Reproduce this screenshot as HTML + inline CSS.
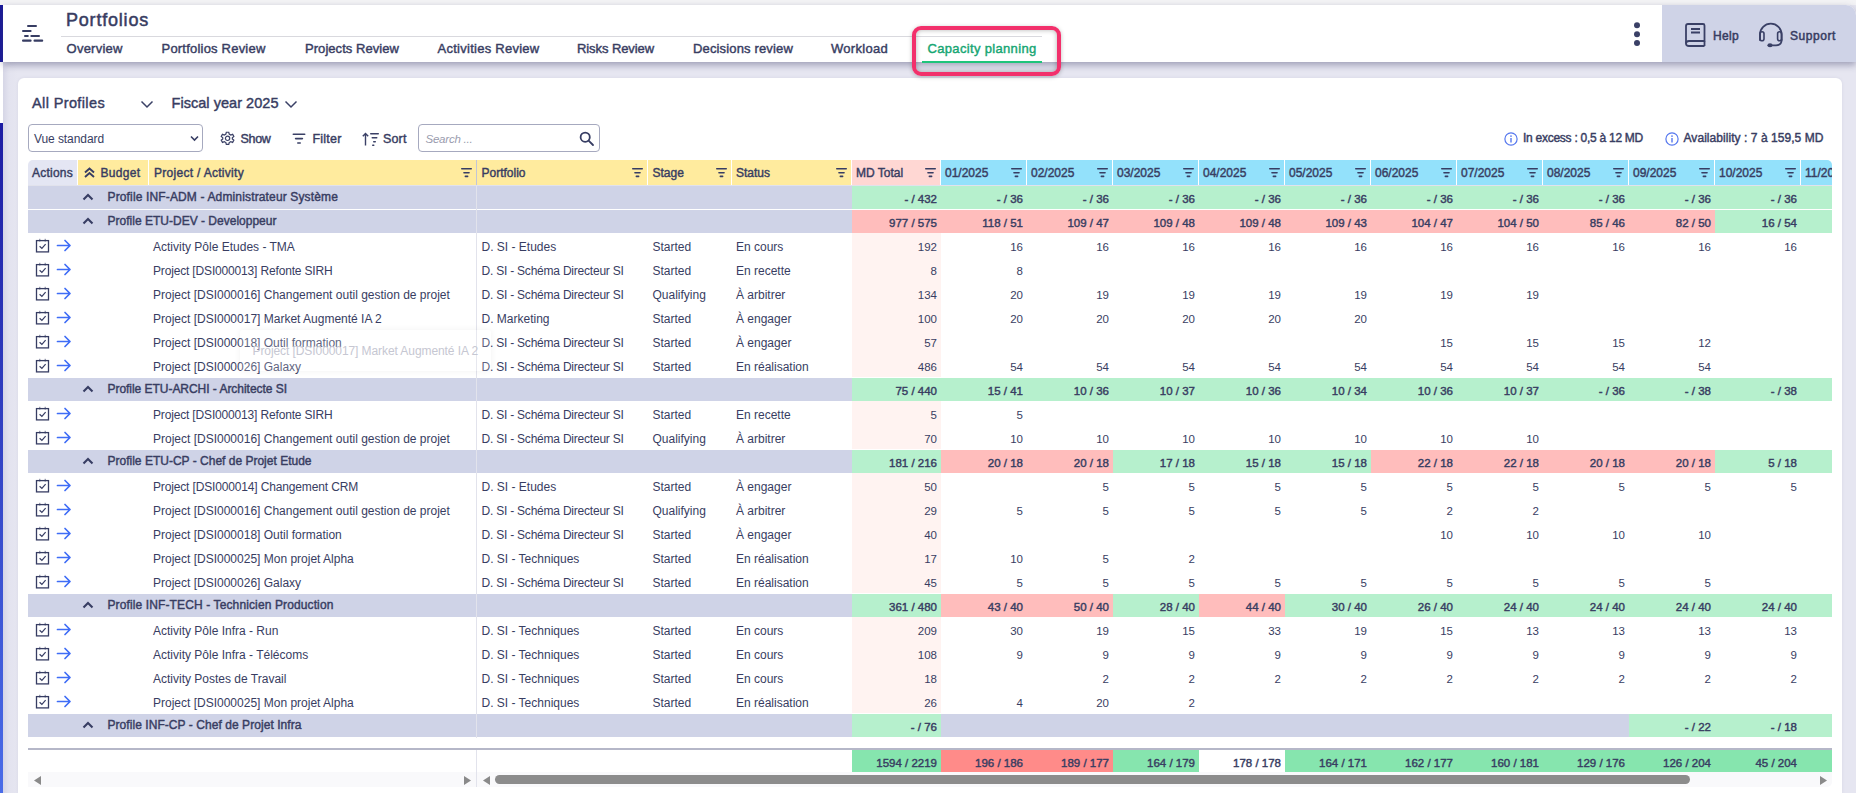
<!DOCTYPE html>
<html><head><meta charset="utf-8"><title>Capacity planning</title>
<style>
*{margin:0;padding:0;box-sizing:border-box}
html,body{width:1856px;height:793px;overflow:hidden}
body{position:relative;background:#e6e6f1;font-family:"Liberation Sans",sans-serif;color:#363b5e}
.a{position:absolute}
.t{position:absolute;white-space:nowrap;line-height:1}
</style></head><body>
<div class="a" style="left:0px;top:0px;width:1856px;height:5px;background:#f3f3f5;"></div>
<div class="a" style="left:3px;top:62px;width:1853px;height:731px;background:#e6e6f1;"></div>
<div class="a" style="left:3px;top:62px;width:15px;height:731px;background:linear-gradient(90deg,#d6d6e6,#e3e3ef 40%,#e6e6f1);"></div>
<div class="a" style="left:0px;top:5px;width:3px;height:57px;background:#17179a;"></div>
<div class="a" style="left:0px;top:62px;width:3px;height:61px;background:#ffffff;"></div>
<div class="a" style="left:0px;top:123px;width:3px;height:670px;background:linear-gradient(#1d1da3,#4a6ce8);"></div>
<div class="a" style="left:3px;top:5px;width:1853px;height:57px;background:#ffffff;border-top-right-radius:10px;box-shadow:0 3px 7px rgba(70,72,110,0.45);z-index:2"></div>
<div class="a" style="left:1662px;top:5px;width:194px;height:57px;background:#cfd3e7;border-top-right-radius:10px;z-index:2"></div>
<svg class="a" style="left:20px;top:22px;z-index:3" width="26" height="24" viewBox="0 0 26 24"><g fill="#373d63"><rect x="7" y="3" width="10" height="2" rx="1"/><rect x="2" y="8" width="9.6" height="2" rx="1"/><rect x="4" y="13" width="4.8" height="2" rx="1"/><rect x="10.3" y="13" width="9.7" height="2" rx="1"/><rect x="2" y="17.6" width="9.6" height="2.2" rx="1"/><rect x="13.5" y="17.6" width="9.7" height="2.2" rx="1"/></g></svg>
<div style="position:absolute;left:0;top:0;width:1856px;height:62px;z-index:3">
<div class="t" style="top:11px;font-size:18px;-webkit-text-stroke:0.42px currentColor;color:#383d62;letter-spacing:0.797px;left:66px;-webkit-text-stroke:0.5px currentColor">Portfolios</div>
<div class="a" style="left:61px;top:36px;width:981px;height:1px;background:#d9d9de;"></div>
<div class="t" style="top:42px;font-size:13px;-webkit-text-stroke:0.42px currentColor;color:#383d62;letter-spacing:0.228px;left:66.6px;">Overview</div>
<div class="t" style="top:42px;font-size:13px;-webkit-text-stroke:0.42px currentColor;color:#383d62;letter-spacing:0.210px;left:161.5px;">Portfolios Review</div>
<div class="t" style="top:42px;font-size:13px;-webkit-text-stroke:0.42px currentColor;color:#383d62;letter-spacing:0.054px;left:305px;">Projects Review</div>
<div class="t" style="top:42px;font-size:13px;-webkit-text-stroke:0.42px currentColor;color:#383d62;letter-spacing:0.263px;left:437.5px;">Activities Review</div>
<div class="t" style="top:42px;font-size:13px;-webkit-text-stroke:0.42px currentColor;color:#383d62;letter-spacing:-0.084px;left:577px;">Risks Review</div>
<div class="t" style="top:42px;font-size:13px;-webkit-text-stroke:0.42px currentColor;color:#383d62;letter-spacing:0.154px;left:693px;">Decisions review</div>
<div class="t" style="top:42px;font-size:13px;-webkit-text-stroke:0.42px currentColor;color:#383d62;letter-spacing:0.291px;left:831px;">Workload</div>
<div class="t" style="top:42px;font-size:13px;-webkit-text-stroke:0.42px currentColor;color:#17a673;letter-spacing:0.333px;left:927.5px;">Capacity planning</div>
<div class="a" style="left:922px;top:61px;width:120px;height:2px;background:#1fc47b;"></div>
<svg class="a" style="left:1632px;top:20px;" width="10" height="28" viewBox="0 0 10 28"><g fill="#3a4066"><circle cx="5" cy="5.2" r="3"/><circle cx="5" cy="14.2" r="3"/><circle cx="5" cy="23.1" r="3"/></g></svg>
<svg class="a" style="left:1683px;top:22px;" width="24" height="26" viewBox="0 0 24 26"><g fill="none" stroke="#3a4066" stroke-width="1.8" stroke-linejoin="round"><path d="M3 4 Q3 2 5 2 H20 Q21.5 2 21.5 3.5 V19 H6 Q3 19 3 21.5 Q3 24 6 24 H21.5"/><path d="M3 4 V21.5"/><path d="M21.5 19 V24"/><path d="M8 7 H17 M8 10.5 H17"/></g></svg>
<div class="t" style="top:30px;font-size:12px;-webkit-text-stroke:0.42px currentColor;color:#383d62;letter-spacing:0.330px;left:1713px;-webkit-text-stroke:0.5px currentColor">Help</div>
<svg class="a" style="left:1757px;top:22px;" width="28" height="27" viewBox="0 0 28 27"><g fill="none" stroke="#3a4066" stroke-width="1.8" stroke-linecap="round"><path d="M3 18 V12.5 A10.8 10.8 0 0 1 24.6 12.5 V18"/><rect x="3" y="9.8" width="4" height="9" rx="2" stroke-width="1.6"/><rect x="20.6" y="9.8" width="4" height="9" rx="2" stroke-width="1.6"/><path d="M24.6 18 Q24.6 23.3 19 23.3 H14.5"/></g><ellipse cx="13" cy="23.3" rx="2.6" ry="2" fill="#3a4066"/></svg>
<div class="t" style="top:30px;font-size:12px;-webkit-text-stroke:0.42px currentColor;color:#383d62;letter-spacing:0.567px;left:1790px;-webkit-text-stroke:0.5px currentColor">Support</div>
</div>
<div class="a" style="left:912px;top:26px;width:149px;height:50px;background:transparent;border:4px solid #f2306b;border-radius:9px;box-shadow:inset 0 0 5px rgba(0,0,0,0.3), 0 1px 4px rgba(0,0,0,0.25);z-index:5"></div>
<div class="a" style="left:18px;top:78px;width:1824px;height:720px;background:#ffffff;border-radius:6px;box-shadow:0 0 3px rgba(120,120,160,0.15)"></div>
<div class="t" style="top:96px;font-size:14.5px;-webkit-text-stroke:0.42px currentColor;color:#383d62;letter-spacing:0.376px;left:32px;">All Profiles</div>
<svg class="a" style="left:140px;top:100px;" width="14" height="9" viewBox="0 0 14 9"><path d="M1.5 1.5 L7 7 L12.5 1.5" fill="none" stroke="#3a4066" stroke-width="1.5"/></svg>
<div class="t" style="top:96px;font-size:14.5px;-webkit-text-stroke:0.42px currentColor;color:#383d62;letter-spacing:0.038px;left:171.5px;">Fiscal year 2025</div>
<svg class="a" style="left:284px;top:100px;" width="14" height="9" viewBox="0 0 14 9"><path d="M1.5 1.5 L7 7 L12.5 1.5" fill="none" stroke="#3a4066" stroke-width="1.5"/></svg>
<div class="a" style="left:28px;top:124px;width:175px;height:28px;background:#ffffff;border:1.3px solid #a6a9bf;border-radius:4px"></div>
<div class="t" style="top:133px;font-size:12px;color:#383d62;letter-spacing:-0.078px;left:34px;">Vue standard</div>
<svg class="a" style="left:190px;top:135px;" width="9" height="7" viewBox="0 0 9 7"><path d="M1 1.5 L4.5 5 L8 1.5" fill="none" stroke="#373d63" stroke-width="1.6"/></svg>
<svg class="a" style="left:219.5px;top:131px;" width="15" height="15" viewBox="0 0 15 15"><g fill="none" stroke="#3a4066" stroke-width="1.3" transform="translate(0.5 0.3) scale(0.94)"><path d="M6.2 1 H8.8 L9.3 3 L10.9 3.9 L12.9 3.2 L14.2 5.5 L12.6 6.9 V8.1 L14.2 9.5 L12.9 11.8 L10.9 11.1 L9.3 12 L8.8 14 H6.2 L5.7 12 L4.1 11.1 L2.1 11.8 L0.8 9.5 L2.4 8.1 V6.9 L0.8 5.5 L2.1 3.2 L4.1 3.9 L5.7 3 Z"/><circle cx="7.5" cy="7.5" r="2.3"/></g></svg>
<div class="t" style="top:133px;font-size:12.5px;-webkit-text-stroke:0.42px currentColor;color:#383d62;letter-spacing:-0.317px;left:240.5px;">Show</div>
<svg class="a" style="left:292px;top:133px;" width="14" height="12" viewBox="0 0 14 12"><g fill="#3a4066"><rect x="0.5" y="0.5" width="13" height="1.6" rx="0.8"/><rect x="2.8" y="4.8" width="8.4" height="1.6" rx="0.8"/><rect x="5" y="9.2" width="4" height="1.6" rx="0.8"/></g></svg>
<div class="t" style="top:133px;font-size:12.5px;-webkit-text-stroke:0.42px currentColor;color:#383d62;letter-spacing:0.204px;left:312.5px;">Filter</div>
<svg class="a" style="left:361.5px;top:132px;" width="18" height="14" viewBox="0 0 18 14"><g fill="none" stroke="#3a4066" stroke-width="1.4"><path d="M3.5 13.5 V1.5 M0.8 4.3 L3.5 1.5 L6.2 4.3"/></g><g fill="#3a4066"><rect x="8" y="1" width="9" height="1.5" rx="0.7"/><rect x="9.5" y="5" width="6" height="1.5" rx="0.7"/><rect x="11" y="9" width="3" height="1.5" rx="0.7"/><rect x="10" y="12.5" width="2.5" height="1.5" rx="0.7"/></g></svg>
<div class="t" style="top:133px;font-size:12.5px;-webkit-text-stroke:0.42px currentColor;color:#383d62;letter-spacing:0.144px;left:383px;">Sort</div>
<div class="a" style="left:418px;top:124px;width:182px;height:28px;background:#ffffff;border:1.3px solid #a6a9bf;border-radius:4px"></div>
<div class="t" style="top:134px;font-size:11.5px;font-style:italic;color:#9a9cae;letter-spacing:-0.222px;left:425.5px;">Search ...</div>
<svg class="a" style="left:579px;top:131px;" width="16" height="16" viewBox="0 0 16 16"><g fill="none" stroke="#373d63" stroke-width="1.8"><circle cx="6.2" cy="6.2" r="4.6"/><path d="M9.6 9.6 L14 14" stroke-linecap="round"/></g></svg>
<svg class="a" style="left:1503.5px;top:131.5px;" width="14" height="14" viewBox="0 0 14 14"><circle cx="7" cy="7" r="6.1" fill="none" stroke="#5577ee" stroke-width="1.2"/><rect x="6.3" y="6" width="1.4" height="4.5" fill="#5577ee"/><circle cx="7" cy="4.1" r="0.85" fill="#5577ee"/></svg>
<div class="t" style="top:132px;font-size:12px;-webkit-text-stroke:0.42px currentColor;color:#383d62;letter-spacing:-0.263px;left:1523px;">In excess : 0,5 à 12 MD</div>
<svg class="a" style="left:1664.5px;top:131.5px;" width="14" height="14" viewBox="0 0 14 14"><circle cx="7" cy="7" r="6.1" fill="none" stroke="#5577ee" stroke-width="1.2"/><rect x="6.3" y="6" width="1.4" height="4.5" fill="#5577ee"/><circle cx="7" cy="4.1" r="0.85" fill="#5577ee"/></svg>
<div class="t" style="top:132px;font-size:12px;-webkit-text-stroke:0.42px currentColor;color:#383d62;letter-spacing:0.055px;left:1683.5px;">Availability : 7 à 159,5 MD</div>
<div class="a" style="left:28px;top:160px;width:49px;height:25px;background:#e4e6f3;border-top-left-radius:5px"></div>
<div class="a" style="left:78px;top:160px;width:70px;height:25px;background:#ffeb9e;"></div>
<div class="a" style="left:149px;top:160px;width:327px;height:25px;background:#ffeb9e;"></div>
<div class="a" style="left:477px;top:160px;width:170px;height:25px;background:#ffeb9e;"></div>
<div class="a" style="left:648px;top:160px;width:83px;height:25px;background:#ffeb9e;"></div>
<div class="a" style="left:732px;top:160px;width:119px;height:25px;background:#ffeb9e;"></div>
<div class="a" style="left:852px;top:160px;width:88px;height:25px;background:#ffd7d3;"></div>
<div class="a" style="left:941px;top:160px;width:85px;height:25px;background:#93e1fb;"></div>
<div class="a" style="left:1027px;top:160px;width:85px;height:25px;background:#93e1fb;"></div>
<div class="a" style="left:1113px;top:160px;width:85px;height:25px;background:#93e1fb;"></div>
<div class="a" style="left:1199px;top:160px;width:85px;height:25px;background:#93e1fb;"></div>
<div class="a" style="left:1285px;top:160px;width:85px;height:25px;background:#93e1fb;"></div>
<div class="a" style="left:1371px;top:160px;width:85px;height:25px;background:#93e1fb;"></div>
<div class="a" style="left:1457px;top:160px;width:85px;height:25px;background:#93e1fb;"></div>
<div class="a" style="left:1543px;top:160px;width:85px;height:25px;background:#93e1fb;"></div>
<div class="a" style="left:1629px;top:160px;width:85px;height:25px;background:#93e1fb;"></div>
<div class="a" style="left:1715px;top:160px;width:85px;height:25px;background:#93e1fb;"></div>
<div class="a" style="left:1801px;top:160px;width:31px;height:25px;background:#93e1fb;border-top-right-radius:5px"></div>
<div class="t" style="top:167px;font-size:12px;-webkit-text-stroke:0.42px currentColor;color:#383d62;letter-spacing:0.235px;left:32px;">Actions</div>
<svg class="a" style="left:83px;top:167px;" width="13" height="11" viewBox="0 0 13 11"><g fill="none" stroke="#373d63" stroke-width="1.9"><path d="M2 5.5 L6.5 1.5 L11 5.5"/><path d="M2 10 L6.5 6 L11 10"/></g></svg>
<div class="t" style="top:167px;font-size:12px;-webkit-text-stroke:0.42px currentColor;color:#383d62;letter-spacing:0.328px;left:100.5px;">Budget</div>
<div class="t" style="top:167px;font-size:12px;-webkit-text-stroke:0.42px currentColor;color:#383d62;letter-spacing:0.295px;left:154px;">Project / Activity</div>
<div class="t" style="top:167px;font-size:12px;-webkit-text-stroke:0.42px currentColor;color:#383d62;left:481.5px;">Portfolio</div>
<div class="t" style="top:167px;font-size:12px;-webkit-text-stroke:0.42px currentColor;color:#383d62;left:652.5px;">Stage</div>
<div class="t" style="top:167px;font-size:12px;-webkit-text-stroke:0.42px currentColor;color:#383d62;left:736px;">Status</div>
<div class="t" style="top:167px;font-size:12px;-webkit-text-stroke:0.42px currentColor;color:#383d62;left:856px;">MD Total</div>
<div class="a" style="left:0;top:0;width:1832px;height:793px;overflow:hidden">
<div class="t" style="top:167px;font-size:12px;-webkit-text-stroke:0.42px currentColor;color:#383d62;left:945px;">01/2025</div>
<div class="t" style="top:167px;font-size:12px;-webkit-text-stroke:0.42px currentColor;color:#383d62;left:1031px;">02/2025</div>
<div class="t" style="top:167px;font-size:12px;-webkit-text-stroke:0.42px currentColor;color:#383d62;left:1117px;">03/2025</div>
<div class="t" style="top:167px;font-size:12px;-webkit-text-stroke:0.42px currentColor;color:#383d62;left:1203px;">04/2025</div>
<div class="t" style="top:167px;font-size:12px;-webkit-text-stroke:0.42px currentColor;color:#383d62;left:1289px;">05/2025</div>
<div class="t" style="top:167px;font-size:12px;-webkit-text-stroke:0.42px currentColor;color:#383d62;left:1375px;">06/2025</div>
<div class="t" style="top:167px;font-size:12px;-webkit-text-stroke:0.42px currentColor;color:#383d62;left:1461px;">07/2025</div>
<div class="t" style="top:167px;font-size:12px;-webkit-text-stroke:0.42px currentColor;color:#383d62;left:1547px;">08/2025</div>
<div class="t" style="top:167px;font-size:12px;-webkit-text-stroke:0.42px currentColor;color:#383d62;left:1633px;">09/2025</div>
<div class="t" style="top:167px;font-size:12px;-webkit-text-stroke:0.42px currentColor;color:#383d62;left:1719px;">10/2025</div>
<div class="t" style="top:167px;font-size:12px;-webkit-text-stroke:0.42px currentColor;color:#383d62;left:1805px;">11/2025</div>
</div>
<svg class="a" style="left:461px;top:167px;" width="11" height="11" viewBox="0 0 11 11"><g fill="#373d63"><rect x="0" y="1" width="11" height="1.5" rx="0.7"/><rect x="2.2" y="4.9" width="6.6" height="1.5" rx="0.7"/><rect x="3.6" y="8.6" width="3.8" height="1.6" rx="0.7"/></g></svg>
<svg class="a" style="left:632px;top:167px;" width="11" height="11" viewBox="0 0 11 11"><g fill="#373d63"><rect x="0" y="1" width="11" height="1.5" rx="0.7"/><rect x="2.2" y="4.9" width="6.6" height="1.5" rx="0.7"/><rect x="3.6" y="8.6" width="3.8" height="1.6" rx="0.7"/></g></svg>
<svg class="a" style="left:716px;top:167px;" width="11" height="11" viewBox="0 0 11 11"><g fill="#373d63"><rect x="0" y="1" width="11" height="1.5" rx="0.7"/><rect x="2.2" y="4.9" width="6.6" height="1.5" rx="0.7"/><rect x="3.6" y="8.6" width="3.8" height="1.6" rx="0.7"/></g></svg>
<svg class="a" style="left:836px;top:167px;" width="11" height="11" viewBox="0 0 11 11"><g fill="#373d63"><rect x="0" y="1" width="11" height="1.5" rx="0.7"/><rect x="2.2" y="4.9" width="6.6" height="1.5" rx="0.7"/><rect x="3.6" y="8.6" width="3.8" height="1.6" rx="0.7"/></g></svg>
<svg class="a" style="left:925px;top:167px;" width="11" height="11" viewBox="0 0 11 11"><g fill="#373d63"><rect x="0" y="1" width="11" height="1.5" rx="0.7"/><rect x="2.2" y="4.9" width="6.6" height="1.5" rx="0.7"/><rect x="3.6" y="8.6" width="3.8" height="1.6" rx="0.7"/></g></svg>
<svg class="a" style="left:1011px;top:167px;" width="11" height="11" viewBox="0 0 11 11"><g fill="#373d63"><rect x="0" y="1" width="11" height="1.5" rx="0.7"/><rect x="2.2" y="4.9" width="6.6" height="1.5" rx="0.7"/><rect x="3.6" y="8.6" width="3.8" height="1.6" rx="0.7"/></g></svg>
<svg class="a" style="left:1097px;top:167px;" width="11" height="11" viewBox="0 0 11 11"><g fill="#373d63"><rect x="0" y="1" width="11" height="1.5" rx="0.7"/><rect x="2.2" y="4.9" width="6.6" height="1.5" rx="0.7"/><rect x="3.6" y="8.6" width="3.8" height="1.6" rx="0.7"/></g></svg>
<svg class="a" style="left:1183px;top:167px;" width="11" height="11" viewBox="0 0 11 11"><g fill="#373d63"><rect x="0" y="1" width="11" height="1.5" rx="0.7"/><rect x="2.2" y="4.9" width="6.6" height="1.5" rx="0.7"/><rect x="3.6" y="8.6" width="3.8" height="1.6" rx="0.7"/></g></svg>
<svg class="a" style="left:1269px;top:167px;" width="11" height="11" viewBox="0 0 11 11"><g fill="#373d63"><rect x="0" y="1" width="11" height="1.5" rx="0.7"/><rect x="2.2" y="4.9" width="6.6" height="1.5" rx="0.7"/><rect x="3.6" y="8.6" width="3.8" height="1.6" rx="0.7"/></g></svg>
<svg class="a" style="left:1355px;top:167px;" width="11" height="11" viewBox="0 0 11 11"><g fill="#373d63"><rect x="0" y="1" width="11" height="1.5" rx="0.7"/><rect x="2.2" y="4.9" width="6.6" height="1.5" rx="0.7"/><rect x="3.6" y="8.6" width="3.8" height="1.6" rx="0.7"/></g></svg>
<svg class="a" style="left:1441px;top:167px;" width="11" height="11" viewBox="0 0 11 11"><g fill="#373d63"><rect x="0" y="1" width="11" height="1.5" rx="0.7"/><rect x="2.2" y="4.9" width="6.6" height="1.5" rx="0.7"/><rect x="3.6" y="8.6" width="3.8" height="1.6" rx="0.7"/></g></svg>
<svg class="a" style="left:1527px;top:167px;" width="11" height="11" viewBox="0 0 11 11"><g fill="#373d63"><rect x="0" y="1" width="11" height="1.5" rx="0.7"/><rect x="2.2" y="4.9" width="6.6" height="1.5" rx="0.7"/><rect x="3.6" y="8.6" width="3.8" height="1.6" rx="0.7"/></g></svg>
<svg class="a" style="left:1613px;top:167px;" width="11" height="11" viewBox="0 0 11 11"><g fill="#373d63"><rect x="0" y="1" width="11" height="1.5" rx="0.7"/><rect x="2.2" y="4.9" width="6.6" height="1.5" rx="0.7"/><rect x="3.6" y="8.6" width="3.8" height="1.6" rx="0.7"/></g></svg>
<svg class="a" style="left:1699px;top:167px;" width="11" height="11" viewBox="0 0 11 11"><g fill="#373d63"><rect x="0" y="1" width="11" height="1.5" rx="0.7"/><rect x="2.2" y="4.9" width="6.6" height="1.5" rx="0.7"/><rect x="3.6" y="8.6" width="3.8" height="1.6" rx="0.7"/></g></svg>
<svg class="a" style="left:1785px;top:167px;" width="11" height="11" viewBox="0 0 11 11"><g fill="#373d63"><rect x="0" y="1" width="11" height="1.5" rx="0.7"/><rect x="2.2" y="4.9" width="6.6" height="1.5" rx="0.7"/><rect x="3.6" y="8.6" width="3.8" height="1.6" rx="0.7"/></g></svg>
<div class="a" style="left:28px;top:186px;width:824px;height:23px;background:#cfd3e7;"></div>
<div class="a" style="left:852px;top:186px;width:89px;height:23px;background:#b6f0cd;"></div>
<div class="a" style="left:941px;top:186px;width:86px;height:23px;background:#b6f0cd;"></div>
<div class="a" style="left:1027px;top:186px;width:86px;height:23px;background:#b6f0cd;"></div>
<div class="a" style="left:1113px;top:186px;width:86px;height:23px;background:#b6f0cd;"></div>
<div class="a" style="left:1199px;top:186px;width:86px;height:23px;background:#b6f0cd;"></div>
<div class="a" style="left:1285px;top:186px;width:86px;height:23px;background:#b6f0cd;"></div>
<div class="a" style="left:1371px;top:186px;width:86px;height:23px;background:#b6f0cd;"></div>
<div class="a" style="left:1457px;top:186px;width:86px;height:23px;background:#b6f0cd;"></div>
<div class="a" style="left:1543px;top:186px;width:86px;height:23px;background:#b6f0cd;"></div>
<div class="a" style="left:1629px;top:186px;width:86px;height:23px;background:#b6f0cd;"></div>
<div class="a" style="left:1715px;top:186px;width:86px;height:23px;background:#b6f0cd;"></div>
<div class="a" style="left:1801px;top:186px;width:31px;height:23px;background:#b6f0cd;"></div>
<svg class="a" style="left:82px;top:193px;" width="12" height="8" viewBox="0 0 12 8"><path d="M1.5 6.5 L6 2 L10.5 6.5" fill="none" stroke="#373d63" stroke-width="2.1"/></svg>
<div class="t" style="top:191px;font-size:12px;-webkit-text-stroke:0.42px currentColor;color:#383d62;letter-spacing:0.145px;left:107.5px;">Profile INF-ADM - Administrateur Système</div>
<div class="t" style="top:194px;font-size:11.5px;-webkit-text-stroke:0.42px currentColor;color:#383d62;right:919.00px;">- / 432</div>
<div class="t" style="top:194px;font-size:11.5px;-webkit-text-stroke:0.42px currentColor;color:#383d62;right:833.00px;">- / 36</div>
<div class="t" style="top:194px;font-size:11.5px;-webkit-text-stroke:0.42px currentColor;color:#383d62;right:747.00px;">- / 36</div>
<div class="t" style="top:194px;font-size:11.5px;-webkit-text-stroke:0.42px currentColor;color:#383d62;right:661.00px;">- / 36</div>
<div class="t" style="top:194px;font-size:11.5px;-webkit-text-stroke:0.42px currentColor;color:#383d62;right:575.00px;">- / 36</div>
<div class="t" style="top:194px;font-size:11.5px;-webkit-text-stroke:0.42px currentColor;color:#383d62;right:489.00px;">- / 36</div>
<div class="t" style="top:194px;font-size:11.5px;-webkit-text-stroke:0.42px currentColor;color:#383d62;right:403.00px;">- / 36</div>
<div class="t" style="top:194px;font-size:11.5px;-webkit-text-stroke:0.42px currentColor;color:#383d62;right:317.00px;">- / 36</div>
<div class="t" style="top:194px;font-size:11.5px;-webkit-text-stroke:0.42px currentColor;color:#383d62;right:231.00px;">- / 36</div>
<div class="t" style="top:194px;font-size:11.5px;-webkit-text-stroke:0.42px currentColor;color:#383d62;right:145.00px;">- / 36</div>
<div class="t" style="top:194px;font-size:11.5px;-webkit-text-stroke:0.42px currentColor;color:#383d62;right:59.00px;">- / 36</div>
<div class="a" style="left:28px;top:210px;width:824px;height:23px;background:#cfd3e7;"></div>
<div class="a" style="left:852px;top:210px;width:89px;height:23px;background:#ffbdbc;"></div>
<div class="a" style="left:941px;top:210px;width:86px;height:23px;background:#ffbdbc;"></div>
<div class="a" style="left:1027px;top:210px;width:86px;height:23px;background:#ffbdbc;"></div>
<div class="a" style="left:1113px;top:210px;width:86px;height:23px;background:#ffbdbc;"></div>
<div class="a" style="left:1199px;top:210px;width:86px;height:23px;background:#ffbdbc;"></div>
<div class="a" style="left:1285px;top:210px;width:86px;height:23px;background:#ffbdbc;"></div>
<div class="a" style="left:1371px;top:210px;width:86px;height:23px;background:#ffbdbc;"></div>
<div class="a" style="left:1457px;top:210px;width:86px;height:23px;background:#ffbdbc;"></div>
<div class="a" style="left:1543px;top:210px;width:86px;height:23px;background:#ffbdbc;"></div>
<div class="a" style="left:1629px;top:210px;width:86px;height:23px;background:#ffbdbc;"></div>
<div class="a" style="left:1715px;top:210px;width:86px;height:23px;background:#b6f0cd;"></div>
<div class="a" style="left:1801px;top:210px;width:31px;height:23px;background:#b6f0cd;"></div>
<svg class="a" style="left:82px;top:217px;" width="12" height="8" viewBox="0 0 12 8"><path d="M1.5 6.5 L6 2 L10.5 6.5" fill="none" stroke="#373d63" stroke-width="2.1"/></svg>
<div class="t" style="top:215px;font-size:12px;-webkit-text-stroke:0.42px currentColor;color:#383d62;letter-spacing:0.009px;left:107.5px;">Profile ETU-DEV - Developpeur</div>
<div class="t" style="top:218px;font-size:11.5px;-webkit-text-stroke:0.42px currentColor;color:#383d62;right:919.00px;">977 / 575</div>
<div class="t" style="top:218px;font-size:11.5px;-webkit-text-stroke:0.42px currentColor;color:#383d62;right:833.00px;">118 / 51</div>
<div class="t" style="top:218px;font-size:11.5px;-webkit-text-stroke:0.42px currentColor;color:#383d62;right:747.00px;">109 / 47</div>
<div class="t" style="top:218px;font-size:11.5px;-webkit-text-stroke:0.42px currentColor;color:#383d62;right:661.00px;">109 / 48</div>
<div class="t" style="top:218px;font-size:11.5px;-webkit-text-stroke:0.42px currentColor;color:#383d62;right:575.00px;">109 / 48</div>
<div class="t" style="top:218px;font-size:11.5px;-webkit-text-stroke:0.42px currentColor;color:#383d62;right:489.00px;">109 / 43</div>
<div class="t" style="top:218px;font-size:11.5px;-webkit-text-stroke:0.42px currentColor;color:#383d62;right:403.00px;">104 / 47</div>
<div class="t" style="top:218px;font-size:11.5px;-webkit-text-stroke:0.42px currentColor;color:#383d62;right:317.00px;">104 / 50</div>
<div class="t" style="top:218px;font-size:11.5px;-webkit-text-stroke:0.42px currentColor;color:#383d62;right:231.00px;">85 / 46</div>
<div class="t" style="top:218px;font-size:11.5px;-webkit-text-stroke:0.42px currentColor;color:#383d62;right:145.00px;">82 / 50</div>
<div class="t" style="top:218px;font-size:11.5px;-webkit-text-stroke:0.42px currentColor;color:#383d62;right:59.00px;">16 / 54</div>
<div class="a" style="left:852px;top:233px;width:89px;height:24px;background:#fff3f1;"></div>
<svg class="a" style="left:35px;top:237px;" width="16" height="16" viewBox="0 0 16 16"><g fill="none" stroke="#373d63" stroke-width="1.3"><rect x="1.5" y="3.6" width="12" height="11.3"/><path d="M4.8 1.8 V4.6 M10.2 1.8 V4.6" stroke-width="0.9" opacity="0.8"/><path d="M4.6 9.2 L6.9 11.4 L10.6 7.2" stroke-width="1.2"/></g></svg>
<svg class="a" style="left:56px;top:239px;" width="16" height="13" viewBox="0 0 16 13"><g fill="none" stroke="#3f6df6" stroke-width="1.7" stroke-linecap="round" stroke-linejoin="round"><path d="M1.5 6.5 H13.8 M9 1.5 L14 6.5 L9 11.5"/></g></svg>
<div class="t" style="top:241px;font-size:12px;color:#383d62;left:153px;">Activity Pôle Etudes - TMA</div>
<div class="t" style="top:241px;font-size:12px;color:#383d62;left:481.5px;">D. SI - Etudes</div>
<div class="t" style="top:241px;font-size:12px;color:#383d62;left:652.5px;">Started</div>
<div class="t" style="top:241px;font-size:12px;color:#383d62;left:736px;">En cours</div>
<div class="t" style="top:241.5px;font-size:11.5px;color:#383d62;right:919.00px;">192</div>
<div class="t" style="top:241.5px;font-size:11.5px;color:#383d62;right:833.00px;">16</div>
<div class="t" style="top:241.5px;font-size:11.5px;color:#383d62;right:747.00px;">16</div>
<div class="t" style="top:241.5px;font-size:11.5px;color:#383d62;right:661.00px;">16</div>
<div class="t" style="top:241.5px;font-size:11.5px;color:#383d62;right:575.00px;">16</div>
<div class="t" style="top:241.5px;font-size:11.5px;color:#383d62;right:489.00px;">16</div>
<div class="t" style="top:241.5px;font-size:11.5px;color:#383d62;right:403.00px;">16</div>
<div class="t" style="top:241.5px;font-size:11.5px;color:#383d62;right:317.00px;">16</div>
<div class="t" style="top:241.5px;font-size:11.5px;color:#383d62;right:231.00px;">16</div>
<div class="t" style="top:241.5px;font-size:11.5px;color:#383d62;right:145.00px;">16</div>
<div class="t" style="top:241.5px;font-size:11.5px;color:#383d62;right:59.00px;">16</div>
<div class="a" style="left:852px;top:257px;width:89px;height:24px;background:#fff3f1;"></div>
<svg class="a" style="left:35px;top:261px;" width="16" height="16" viewBox="0 0 16 16"><g fill="none" stroke="#373d63" stroke-width="1.3"><rect x="1.5" y="3.6" width="12" height="11.3"/><path d="M4.8 1.8 V4.6 M10.2 1.8 V4.6" stroke-width="0.9" opacity="0.8"/><path d="M4.6 9.2 L6.9 11.4 L10.6 7.2" stroke-width="1.2"/></g></svg>
<svg class="a" style="left:56px;top:263px;" width="16" height="13" viewBox="0 0 16 13"><g fill="none" stroke="#3f6df6" stroke-width="1.7" stroke-linecap="round" stroke-linejoin="round"><path d="M1.5 6.5 H13.8 M9 1.5 L14 6.5 L9 11.5"/></g></svg>
<div class="t" style="top:265px;font-size:12px;color:#383d62;letter-spacing:-0.164px;left:153px;">Project [DSI000013] Refonte SIRH</div>
<div class="t" style="top:265px;font-size:12px;color:#383d62;letter-spacing:-0.219px;left:481.5px;">D. SI - Schéma Directeur SI</div>
<div class="t" style="top:265px;font-size:12px;color:#383d62;left:652.5px;">Started</div>
<div class="t" style="top:265px;font-size:12px;color:#383d62;left:736px;">En recette</div>
<div class="t" style="top:265.5px;font-size:11.5px;color:#383d62;right:919.00px;">8</div>
<div class="t" style="top:265.5px;font-size:11.5px;color:#383d62;right:833.00px;">8</div>
<div class="a" style="left:852px;top:281px;width:89px;height:24px;background:#fff3f1;"></div>
<svg class="a" style="left:35px;top:285px;" width="16" height="16" viewBox="0 0 16 16"><g fill="none" stroke="#373d63" stroke-width="1.3"><rect x="1.5" y="3.6" width="12" height="11.3"/><path d="M4.8 1.8 V4.6 M10.2 1.8 V4.6" stroke-width="0.9" opacity="0.8"/><path d="M4.6 9.2 L6.9 11.4 L10.6 7.2" stroke-width="1.2"/></g></svg>
<svg class="a" style="left:56px;top:287px;" width="16" height="13" viewBox="0 0 16 13"><g fill="none" stroke="#3f6df6" stroke-width="1.7" stroke-linecap="round" stroke-linejoin="round"><path d="M1.5 6.5 H13.8 M9 1.5 L14 6.5 L9 11.5"/></g></svg>
<div class="t" style="top:289px;font-size:12px;color:#383d62;left:153px;">Project [DSI000016] Changement outil gestion de projet</div>
<div class="t" style="top:289px;font-size:12px;color:#383d62;letter-spacing:-0.219px;left:481.5px;">D. SI - Schéma Directeur SI</div>
<div class="t" style="top:289px;font-size:12px;color:#383d62;left:652.5px;">Qualifying</div>
<div class="t" style="top:289px;font-size:12px;color:#383d62;left:736px;">À arbitrer</div>
<div class="t" style="top:289.5px;font-size:11.5px;color:#383d62;right:919.00px;">134</div>
<div class="t" style="top:289.5px;font-size:11.5px;color:#383d62;right:833.00px;">20</div>
<div class="t" style="top:289.5px;font-size:11.5px;color:#383d62;right:747.00px;">19</div>
<div class="t" style="top:289.5px;font-size:11.5px;color:#383d62;right:661.00px;">19</div>
<div class="t" style="top:289.5px;font-size:11.5px;color:#383d62;right:575.00px;">19</div>
<div class="t" style="top:289.5px;font-size:11.5px;color:#383d62;right:489.00px;">19</div>
<div class="t" style="top:289.5px;font-size:11.5px;color:#383d62;right:403.00px;">19</div>
<div class="t" style="top:289.5px;font-size:11.5px;color:#383d62;right:317.00px;">19</div>
<div class="a" style="left:852px;top:305px;width:89px;height:24px;background:#fff3f1;"></div>
<svg class="a" style="left:35px;top:309px;" width="16" height="16" viewBox="0 0 16 16"><g fill="none" stroke="#373d63" stroke-width="1.3"><rect x="1.5" y="3.6" width="12" height="11.3"/><path d="M4.8 1.8 V4.6 M10.2 1.8 V4.6" stroke-width="0.9" opacity="0.8"/><path d="M4.6 9.2 L6.9 11.4 L10.6 7.2" stroke-width="1.2"/></g></svg>
<svg class="a" style="left:56px;top:311px;" width="16" height="13" viewBox="0 0 16 13"><g fill="none" stroke="#3f6df6" stroke-width="1.7" stroke-linecap="round" stroke-linejoin="round"><path d="M1.5 6.5 H13.8 M9 1.5 L14 6.5 L9 11.5"/></g></svg>
<div class="t" style="top:313px;font-size:12px;color:#383d62;left:153px;">Project [DSI000017] Market Augmenté IA 2</div>
<div class="t" style="top:313px;font-size:12px;color:#383d62;left:481.5px;">D. Marketing</div>
<div class="t" style="top:313px;font-size:12px;color:#383d62;left:652.5px;">Started</div>
<div class="t" style="top:313px;font-size:12px;color:#383d62;left:736px;">À engager</div>
<div class="t" style="top:313.5px;font-size:11.5px;color:#383d62;right:919.00px;">100</div>
<div class="t" style="top:313.5px;font-size:11.5px;color:#383d62;right:833.00px;">20</div>
<div class="t" style="top:313.5px;font-size:11.5px;color:#383d62;right:747.00px;">20</div>
<div class="t" style="top:313.5px;font-size:11.5px;color:#383d62;right:661.00px;">20</div>
<div class="t" style="top:313.5px;font-size:11.5px;color:#383d62;right:575.00px;">20</div>
<div class="t" style="top:313.5px;font-size:11.5px;color:#383d62;right:489.00px;">20</div>
<div class="a" style="left:852px;top:329px;width:89px;height:24px;background:#fff3f1;"></div>
<svg class="a" style="left:35px;top:333px;" width="16" height="16" viewBox="0 0 16 16"><g fill="none" stroke="#373d63" stroke-width="1.3"><rect x="1.5" y="3.6" width="12" height="11.3"/><path d="M4.8 1.8 V4.6 M10.2 1.8 V4.6" stroke-width="0.9" opacity="0.8"/><path d="M4.6 9.2 L6.9 11.4 L10.6 7.2" stroke-width="1.2"/></g></svg>
<svg class="a" style="left:56px;top:335px;" width="16" height="13" viewBox="0 0 16 13"><g fill="none" stroke="#3f6df6" stroke-width="1.7" stroke-linecap="round" stroke-linejoin="round"><path d="M1.5 6.5 H13.8 M9 1.5 L14 6.5 L9 11.5"/></g></svg>
<div class="t" style="top:337px;font-size:12px;color:#383d62;left:153px;">Project [DSI000018] Outil formation</div>
<div class="t" style="top:337px;font-size:12px;color:#383d62;letter-spacing:-0.219px;left:481.5px;">D. SI - Schéma Directeur SI</div>
<div class="t" style="top:337px;font-size:12px;color:#383d62;left:652.5px;">Started</div>
<div class="t" style="top:337px;font-size:12px;color:#383d62;left:736px;">À engager</div>
<div class="t" style="top:337.5px;font-size:11.5px;color:#383d62;right:919.00px;">57</div>
<div class="t" style="top:337.5px;font-size:11.5px;color:#383d62;right:403.00px;">15</div>
<div class="t" style="top:337.5px;font-size:11.5px;color:#383d62;right:317.00px;">15</div>
<div class="t" style="top:337.5px;font-size:11.5px;color:#383d62;right:231.00px;">15</div>
<div class="t" style="top:337.5px;font-size:11.5px;color:#383d62;right:145.00px;">12</div>
<div class="a" style="left:852px;top:353px;width:89px;height:24px;background:#fff3f1;"></div>
<svg class="a" style="left:35px;top:357px;" width="16" height="16" viewBox="0 0 16 16"><g fill="none" stroke="#373d63" stroke-width="1.3"><rect x="1.5" y="3.6" width="12" height="11.3"/><path d="M4.8 1.8 V4.6 M10.2 1.8 V4.6" stroke-width="0.9" opacity="0.8"/><path d="M4.6 9.2 L6.9 11.4 L10.6 7.2" stroke-width="1.2"/></g></svg>
<svg class="a" style="left:56px;top:359px;" width="16" height="13" viewBox="0 0 16 13"><g fill="none" stroke="#3f6df6" stroke-width="1.7" stroke-linecap="round" stroke-linejoin="round"><path d="M1.5 6.5 H13.8 M9 1.5 L14 6.5 L9 11.5"/></g></svg>
<div class="t" style="top:361px;font-size:12px;color:#383d62;left:153px;">Project [DSI000026] Galaxy</div>
<div class="t" style="top:361px;font-size:12px;color:#383d62;letter-spacing:-0.219px;left:481.5px;">D. SI - Schéma Directeur SI</div>
<div class="t" style="top:361px;font-size:12px;color:#383d62;left:652.5px;">Started</div>
<div class="t" style="top:361px;font-size:12px;color:#383d62;left:736px;">En réalisation</div>
<div class="t" style="top:361.5px;font-size:11.5px;color:#383d62;right:919.00px;">486</div>
<div class="t" style="top:361.5px;font-size:11.5px;color:#383d62;right:833.00px;">54</div>
<div class="t" style="top:361.5px;font-size:11.5px;color:#383d62;right:747.00px;">54</div>
<div class="t" style="top:361.5px;font-size:11.5px;color:#383d62;right:661.00px;">54</div>
<div class="t" style="top:361.5px;font-size:11.5px;color:#383d62;right:575.00px;">54</div>
<div class="t" style="top:361.5px;font-size:11.5px;color:#383d62;right:489.00px;">54</div>
<div class="t" style="top:361.5px;font-size:11.5px;color:#383d62;right:403.00px;">54</div>
<div class="t" style="top:361.5px;font-size:11.5px;color:#383d62;right:317.00px;">54</div>
<div class="t" style="top:361.5px;font-size:11.5px;color:#383d62;right:231.00px;">54</div>
<div class="t" style="top:361.5px;font-size:11.5px;color:#383d62;right:145.00px;">54</div>
<div class="a" style="left:28px;top:378px;width:824px;height:23px;background:#cfd3e7;"></div>
<div class="a" style="left:852px;top:378px;width:89px;height:23px;background:#b6f0cd;"></div>
<div class="a" style="left:941px;top:378px;width:86px;height:23px;background:#b6f0cd;"></div>
<div class="a" style="left:1027px;top:378px;width:86px;height:23px;background:#b6f0cd;"></div>
<div class="a" style="left:1113px;top:378px;width:86px;height:23px;background:#b6f0cd;"></div>
<div class="a" style="left:1199px;top:378px;width:86px;height:23px;background:#b6f0cd;"></div>
<div class="a" style="left:1285px;top:378px;width:86px;height:23px;background:#b6f0cd;"></div>
<div class="a" style="left:1371px;top:378px;width:86px;height:23px;background:#b6f0cd;"></div>
<div class="a" style="left:1457px;top:378px;width:86px;height:23px;background:#b6f0cd;"></div>
<div class="a" style="left:1543px;top:378px;width:86px;height:23px;background:#b6f0cd;"></div>
<div class="a" style="left:1629px;top:378px;width:86px;height:23px;background:#b6f0cd;"></div>
<div class="a" style="left:1715px;top:378px;width:86px;height:23px;background:#b6f0cd;"></div>
<div class="a" style="left:1801px;top:378px;width:31px;height:23px;background:#b6f0cd;"></div>
<svg class="a" style="left:82px;top:385px;" width="12" height="8" viewBox="0 0 12 8"><path d="M1.5 6.5 L6 2 L10.5 6.5" fill="none" stroke="#373d63" stroke-width="2.1"/></svg>
<div class="t" style="top:383px;font-size:12px;-webkit-text-stroke:0.42px currentColor;color:#383d62;letter-spacing:-0.037px;left:107.5px;">Profile ETU-ARCHI - Architecte SI</div>
<div class="t" style="top:386px;font-size:11.5px;-webkit-text-stroke:0.42px currentColor;color:#383d62;right:919.00px;">75 / 440</div>
<div class="t" style="top:386px;font-size:11.5px;-webkit-text-stroke:0.42px currentColor;color:#383d62;right:833.00px;">15 / 41</div>
<div class="t" style="top:386px;font-size:11.5px;-webkit-text-stroke:0.42px currentColor;color:#383d62;right:747.00px;">10 / 36</div>
<div class="t" style="top:386px;font-size:11.5px;-webkit-text-stroke:0.42px currentColor;color:#383d62;right:661.00px;">10 / 37</div>
<div class="t" style="top:386px;font-size:11.5px;-webkit-text-stroke:0.42px currentColor;color:#383d62;right:575.00px;">10 / 36</div>
<div class="t" style="top:386px;font-size:11.5px;-webkit-text-stroke:0.42px currentColor;color:#383d62;right:489.00px;">10 / 34</div>
<div class="t" style="top:386px;font-size:11.5px;-webkit-text-stroke:0.42px currentColor;color:#383d62;right:403.00px;">10 / 36</div>
<div class="t" style="top:386px;font-size:11.5px;-webkit-text-stroke:0.42px currentColor;color:#383d62;right:317.00px;">10 / 37</div>
<div class="t" style="top:386px;font-size:11.5px;-webkit-text-stroke:0.42px currentColor;color:#383d62;right:231.00px;">- / 36</div>
<div class="t" style="top:386px;font-size:11.5px;-webkit-text-stroke:0.42px currentColor;color:#383d62;right:145.00px;">- / 38</div>
<div class="t" style="top:386px;font-size:11.5px;-webkit-text-stroke:0.42px currentColor;color:#383d62;right:59.00px;">- / 38</div>
<div class="a" style="left:852px;top:401px;width:89px;height:24px;background:#fff3f1;"></div>
<svg class="a" style="left:35px;top:405px;" width="16" height="16" viewBox="0 0 16 16"><g fill="none" stroke="#373d63" stroke-width="1.3"><rect x="1.5" y="3.6" width="12" height="11.3"/><path d="M4.8 1.8 V4.6 M10.2 1.8 V4.6" stroke-width="0.9" opacity="0.8"/><path d="M4.6 9.2 L6.9 11.4 L10.6 7.2" stroke-width="1.2"/></g></svg>
<svg class="a" style="left:56px;top:407px;" width="16" height="13" viewBox="0 0 16 13"><g fill="none" stroke="#3f6df6" stroke-width="1.7" stroke-linecap="round" stroke-linejoin="round"><path d="M1.5 6.5 H13.8 M9 1.5 L14 6.5 L9 11.5"/></g></svg>
<div class="t" style="top:409px;font-size:12px;color:#383d62;letter-spacing:-0.164px;left:153px;">Project [DSI000013] Refonte SIRH</div>
<div class="t" style="top:409px;font-size:12px;color:#383d62;letter-spacing:-0.219px;left:481.5px;">D. SI - Schéma Directeur SI</div>
<div class="t" style="top:409px;font-size:12px;color:#383d62;left:652.5px;">Started</div>
<div class="t" style="top:409px;font-size:12px;color:#383d62;left:736px;">En recette</div>
<div class="t" style="top:409.5px;font-size:11.5px;color:#383d62;right:919.00px;">5</div>
<div class="t" style="top:409.5px;font-size:11.5px;color:#383d62;right:833.00px;">5</div>
<div class="a" style="left:852px;top:425px;width:89px;height:24px;background:#fff3f1;"></div>
<svg class="a" style="left:35px;top:429px;" width="16" height="16" viewBox="0 0 16 16"><g fill="none" stroke="#373d63" stroke-width="1.3"><rect x="1.5" y="3.6" width="12" height="11.3"/><path d="M4.8 1.8 V4.6 M10.2 1.8 V4.6" stroke-width="0.9" opacity="0.8"/><path d="M4.6 9.2 L6.9 11.4 L10.6 7.2" stroke-width="1.2"/></g></svg>
<svg class="a" style="left:56px;top:431px;" width="16" height="13" viewBox="0 0 16 13"><g fill="none" stroke="#3f6df6" stroke-width="1.7" stroke-linecap="round" stroke-linejoin="round"><path d="M1.5 6.5 H13.8 M9 1.5 L14 6.5 L9 11.5"/></g></svg>
<div class="t" style="top:433px;font-size:12px;color:#383d62;left:153px;">Project [DSI000016] Changement outil gestion de projet</div>
<div class="t" style="top:433px;font-size:12px;color:#383d62;letter-spacing:-0.219px;left:481.5px;">D. SI - Schéma Directeur SI</div>
<div class="t" style="top:433px;font-size:12px;color:#383d62;left:652.5px;">Qualifying</div>
<div class="t" style="top:433px;font-size:12px;color:#383d62;left:736px;">À arbitrer</div>
<div class="t" style="top:433.5px;font-size:11.5px;color:#383d62;right:919.00px;">70</div>
<div class="t" style="top:433.5px;font-size:11.5px;color:#383d62;right:833.00px;">10</div>
<div class="t" style="top:433.5px;font-size:11.5px;color:#383d62;right:747.00px;">10</div>
<div class="t" style="top:433.5px;font-size:11.5px;color:#383d62;right:661.00px;">10</div>
<div class="t" style="top:433.5px;font-size:11.5px;color:#383d62;right:575.00px;">10</div>
<div class="t" style="top:433.5px;font-size:11.5px;color:#383d62;right:489.00px;">10</div>
<div class="t" style="top:433.5px;font-size:11.5px;color:#383d62;right:403.00px;">10</div>
<div class="t" style="top:433.5px;font-size:11.5px;color:#383d62;right:317.00px;">10</div>
<div class="a" style="left:28px;top:450px;width:824px;height:23px;background:#cfd3e7;"></div>
<div class="a" style="left:852px;top:450px;width:89px;height:23px;background:#b6f0cd;"></div>
<div class="a" style="left:941px;top:450px;width:86px;height:23px;background:#ffbdbc;"></div>
<div class="a" style="left:1027px;top:450px;width:86px;height:23px;background:#ffbdbc;"></div>
<div class="a" style="left:1113px;top:450px;width:86px;height:23px;background:#b6f0cd;"></div>
<div class="a" style="left:1199px;top:450px;width:86px;height:23px;background:#b6f0cd;"></div>
<div class="a" style="left:1285px;top:450px;width:86px;height:23px;background:#b6f0cd;"></div>
<div class="a" style="left:1371px;top:450px;width:86px;height:23px;background:#ffbdbc;"></div>
<div class="a" style="left:1457px;top:450px;width:86px;height:23px;background:#ffbdbc;"></div>
<div class="a" style="left:1543px;top:450px;width:86px;height:23px;background:#ffbdbc;"></div>
<div class="a" style="left:1629px;top:450px;width:86px;height:23px;background:#ffbdbc;"></div>
<div class="a" style="left:1715px;top:450px;width:86px;height:23px;background:#b6f0cd;"></div>
<div class="a" style="left:1801px;top:450px;width:31px;height:23px;background:#b6f0cd;"></div>
<svg class="a" style="left:82px;top:457px;" width="12" height="8" viewBox="0 0 12 8"><path d="M1.5 6.5 L6 2 L10.5 6.5" fill="none" stroke="#373d63" stroke-width="2.1"/></svg>
<div class="t" style="top:455px;font-size:12px;-webkit-text-stroke:0.42px currentColor;color:#383d62;letter-spacing:0.004px;left:107.5px;">Profile ETU-CP - Chef de Projet Etude</div>
<div class="t" style="top:458px;font-size:11.5px;-webkit-text-stroke:0.42px currentColor;color:#383d62;right:919.00px;">181 / 216</div>
<div class="t" style="top:458px;font-size:11.5px;-webkit-text-stroke:0.42px currentColor;color:#383d62;right:833.00px;">20 / 18</div>
<div class="t" style="top:458px;font-size:11.5px;-webkit-text-stroke:0.42px currentColor;color:#383d62;right:747.00px;">20 / 18</div>
<div class="t" style="top:458px;font-size:11.5px;-webkit-text-stroke:0.42px currentColor;color:#383d62;right:661.00px;">17 / 18</div>
<div class="t" style="top:458px;font-size:11.5px;-webkit-text-stroke:0.42px currentColor;color:#383d62;right:575.00px;">15 / 18</div>
<div class="t" style="top:458px;font-size:11.5px;-webkit-text-stroke:0.42px currentColor;color:#383d62;right:489.00px;">15 / 18</div>
<div class="t" style="top:458px;font-size:11.5px;-webkit-text-stroke:0.42px currentColor;color:#383d62;right:403.00px;">22 / 18</div>
<div class="t" style="top:458px;font-size:11.5px;-webkit-text-stroke:0.42px currentColor;color:#383d62;right:317.00px;">22 / 18</div>
<div class="t" style="top:458px;font-size:11.5px;-webkit-text-stroke:0.42px currentColor;color:#383d62;right:231.00px;">20 / 18</div>
<div class="t" style="top:458px;font-size:11.5px;-webkit-text-stroke:0.42px currentColor;color:#383d62;right:145.00px;">20 / 18</div>
<div class="t" style="top:458px;font-size:11.5px;-webkit-text-stroke:0.42px currentColor;color:#383d62;right:59.00px;">5 / 18</div>
<div class="a" style="left:852px;top:473px;width:89px;height:24px;background:#fff3f1;"></div>
<svg class="a" style="left:35px;top:477px;" width="16" height="16" viewBox="0 0 16 16"><g fill="none" stroke="#373d63" stroke-width="1.3"><rect x="1.5" y="3.6" width="12" height="11.3"/><path d="M4.8 1.8 V4.6 M10.2 1.8 V4.6" stroke-width="0.9" opacity="0.8"/><path d="M4.6 9.2 L6.9 11.4 L10.6 7.2" stroke-width="1.2"/></g></svg>
<svg class="a" style="left:56px;top:479px;" width="16" height="13" viewBox="0 0 16 13"><g fill="none" stroke="#3f6df6" stroke-width="1.7" stroke-linecap="round" stroke-linejoin="round"><path d="M1.5 6.5 H13.8 M9 1.5 L14 6.5 L9 11.5"/></g></svg>
<div class="t" style="top:481px;font-size:12px;color:#383d62;letter-spacing:-0.150px;left:153px;">Project [DSI000014] Changement CRM</div>
<div class="t" style="top:481px;font-size:12px;color:#383d62;left:481.5px;">D. SI - Etudes</div>
<div class="t" style="top:481px;font-size:12px;color:#383d62;left:652.5px;">Started</div>
<div class="t" style="top:481px;font-size:12px;color:#383d62;left:736px;">À engager</div>
<div class="t" style="top:481.5px;font-size:11.5px;color:#383d62;right:919.00px;">50</div>
<div class="t" style="top:481.5px;font-size:11.5px;color:#383d62;right:747.00px;">5</div>
<div class="t" style="top:481.5px;font-size:11.5px;color:#383d62;right:661.00px;">5</div>
<div class="t" style="top:481.5px;font-size:11.5px;color:#383d62;right:575.00px;">5</div>
<div class="t" style="top:481.5px;font-size:11.5px;color:#383d62;right:489.00px;">5</div>
<div class="t" style="top:481.5px;font-size:11.5px;color:#383d62;right:403.00px;">5</div>
<div class="t" style="top:481.5px;font-size:11.5px;color:#383d62;right:317.00px;">5</div>
<div class="t" style="top:481.5px;font-size:11.5px;color:#383d62;right:231.00px;">5</div>
<div class="t" style="top:481.5px;font-size:11.5px;color:#383d62;right:145.00px;">5</div>
<div class="t" style="top:481.5px;font-size:11.5px;color:#383d62;right:59.00px;">5</div>
<div class="a" style="left:852px;top:497px;width:89px;height:24px;background:#fff3f1;"></div>
<svg class="a" style="left:35px;top:501px;" width="16" height="16" viewBox="0 0 16 16"><g fill="none" stroke="#373d63" stroke-width="1.3"><rect x="1.5" y="3.6" width="12" height="11.3"/><path d="M4.8 1.8 V4.6 M10.2 1.8 V4.6" stroke-width="0.9" opacity="0.8"/><path d="M4.6 9.2 L6.9 11.4 L10.6 7.2" stroke-width="1.2"/></g></svg>
<svg class="a" style="left:56px;top:503px;" width="16" height="13" viewBox="0 0 16 13"><g fill="none" stroke="#3f6df6" stroke-width="1.7" stroke-linecap="round" stroke-linejoin="round"><path d="M1.5 6.5 H13.8 M9 1.5 L14 6.5 L9 11.5"/></g></svg>
<div class="t" style="top:505px;font-size:12px;color:#383d62;left:153px;">Project [DSI000016] Changement outil gestion de projet</div>
<div class="t" style="top:505px;font-size:12px;color:#383d62;letter-spacing:-0.219px;left:481.5px;">D. SI - Schéma Directeur SI</div>
<div class="t" style="top:505px;font-size:12px;color:#383d62;left:652.5px;">Qualifying</div>
<div class="t" style="top:505px;font-size:12px;color:#383d62;left:736px;">À arbitrer</div>
<div class="t" style="top:505.5px;font-size:11.5px;color:#383d62;right:919.00px;">29</div>
<div class="t" style="top:505.5px;font-size:11.5px;color:#383d62;right:833.00px;">5</div>
<div class="t" style="top:505.5px;font-size:11.5px;color:#383d62;right:747.00px;">5</div>
<div class="t" style="top:505.5px;font-size:11.5px;color:#383d62;right:661.00px;">5</div>
<div class="t" style="top:505.5px;font-size:11.5px;color:#383d62;right:575.00px;">5</div>
<div class="t" style="top:505.5px;font-size:11.5px;color:#383d62;right:489.00px;">5</div>
<div class="t" style="top:505.5px;font-size:11.5px;color:#383d62;right:403.00px;">2</div>
<div class="t" style="top:505.5px;font-size:11.5px;color:#383d62;right:317.00px;">2</div>
<div class="a" style="left:852px;top:521px;width:89px;height:24px;background:#fff3f1;"></div>
<svg class="a" style="left:35px;top:525px;" width="16" height="16" viewBox="0 0 16 16"><g fill="none" stroke="#373d63" stroke-width="1.3"><rect x="1.5" y="3.6" width="12" height="11.3"/><path d="M4.8 1.8 V4.6 M10.2 1.8 V4.6" stroke-width="0.9" opacity="0.8"/><path d="M4.6 9.2 L6.9 11.4 L10.6 7.2" stroke-width="1.2"/></g></svg>
<svg class="a" style="left:56px;top:527px;" width="16" height="13" viewBox="0 0 16 13"><g fill="none" stroke="#3f6df6" stroke-width="1.7" stroke-linecap="round" stroke-linejoin="round"><path d="M1.5 6.5 H13.8 M9 1.5 L14 6.5 L9 11.5"/></g></svg>
<div class="t" style="top:529px;font-size:12px;color:#383d62;left:153px;">Project [DSI000018] Outil formation</div>
<div class="t" style="top:529px;font-size:12px;color:#383d62;letter-spacing:-0.219px;left:481.5px;">D. SI - Schéma Directeur SI</div>
<div class="t" style="top:529px;font-size:12px;color:#383d62;left:652.5px;">Started</div>
<div class="t" style="top:529px;font-size:12px;color:#383d62;left:736px;">À engager</div>
<div class="t" style="top:529.5px;font-size:11.5px;color:#383d62;right:919.00px;">40</div>
<div class="t" style="top:529.5px;font-size:11.5px;color:#383d62;right:403.00px;">10</div>
<div class="t" style="top:529.5px;font-size:11.5px;color:#383d62;right:317.00px;">10</div>
<div class="t" style="top:529.5px;font-size:11.5px;color:#383d62;right:231.00px;">10</div>
<div class="t" style="top:529.5px;font-size:11.5px;color:#383d62;right:145.00px;">10</div>
<div class="a" style="left:852px;top:545px;width:89px;height:24px;background:#fff3f1;"></div>
<svg class="a" style="left:35px;top:549px;" width="16" height="16" viewBox="0 0 16 16"><g fill="none" stroke="#373d63" stroke-width="1.3"><rect x="1.5" y="3.6" width="12" height="11.3"/><path d="M4.8 1.8 V4.6 M10.2 1.8 V4.6" stroke-width="0.9" opacity="0.8"/><path d="M4.6 9.2 L6.9 11.4 L10.6 7.2" stroke-width="1.2"/></g></svg>
<svg class="a" style="left:56px;top:551px;" width="16" height="13" viewBox="0 0 16 13"><g fill="none" stroke="#3f6df6" stroke-width="1.7" stroke-linecap="round" stroke-linejoin="round"><path d="M1.5 6.5 H13.8 M9 1.5 L14 6.5 L9 11.5"/></g></svg>
<div class="t" style="top:553px;font-size:12px;color:#383d62;left:153px;">Project [DSI000025] Mon projet Alpha</div>
<div class="t" style="top:553px;font-size:12px;color:#383d62;left:481.5px;">D. SI - Techniques</div>
<div class="t" style="top:553px;font-size:12px;color:#383d62;left:652.5px;">Started</div>
<div class="t" style="top:553px;font-size:12px;color:#383d62;left:736px;">En réalisation</div>
<div class="t" style="top:553.5px;font-size:11.5px;color:#383d62;right:919.00px;">17</div>
<div class="t" style="top:553.5px;font-size:11.5px;color:#383d62;right:833.00px;">10</div>
<div class="t" style="top:553.5px;font-size:11.5px;color:#383d62;right:747.00px;">5</div>
<div class="t" style="top:553.5px;font-size:11.5px;color:#383d62;right:661.00px;">2</div>
<div class="a" style="left:852px;top:569px;width:89px;height:24px;background:#fff3f1;"></div>
<svg class="a" style="left:35px;top:573px;" width="16" height="16" viewBox="0 0 16 16"><g fill="none" stroke="#373d63" stroke-width="1.3"><rect x="1.5" y="3.6" width="12" height="11.3"/><path d="M4.8 1.8 V4.6 M10.2 1.8 V4.6" stroke-width="0.9" opacity="0.8"/><path d="M4.6 9.2 L6.9 11.4 L10.6 7.2" stroke-width="1.2"/></g></svg>
<svg class="a" style="left:56px;top:575px;" width="16" height="13" viewBox="0 0 16 13"><g fill="none" stroke="#3f6df6" stroke-width="1.7" stroke-linecap="round" stroke-linejoin="round"><path d="M1.5 6.5 H13.8 M9 1.5 L14 6.5 L9 11.5"/></g></svg>
<div class="t" style="top:577px;font-size:12px;color:#383d62;left:153px;">Project [DSI000026] Galaxy</div>
<div class="t" style="top:577px;font-size:12px;color:#383d62;letter-spacing:-0.219px;left:481.5px;">D. SI - Schéma Directeur SI</div>
<div class="t" style="top:577px;font-size:12px;color:#383d62;left:652.5px;">Started</div>
<div class="t" style="top:577px;font-size:12px;color:#383d62;left:736px;">En réalisation</div>
<div class="t" style="top:577.5px;font-size:11.5px;color:#383d62;right:919.00px;">45</div>
<div class="t" style="top:577.5px;font-size:11.5px;color:#383d62;right:833.00px;">5</div>
<div class="t" style="top:577.5px;font-size:11.5px;color:#383d62;right:747.00px;">5</div>
<div class="t" style="top:577.5px;font-size:11.5px;color:#383d62;right:661.00px;">5</div>
<div class="t" style="top:577.5px;font-size:11.5px;color:#383d62;right:575.00px;">5</div>
<div class="t" style="top:577.5px;font-size:11.5px;color:#383d62;right:489.00px;">5</div>
<div class="t" style="top:577.5px;font-size:11.5px;color:#383d62;right:403.00px;">5</div>
<div class="t" style="top:577.5px;font-size:11.5px;color:#383d62;right:317.00px;">5</div>
<div class="t" style="top:577.5px;font-size:11.5px;color:#383d62;right:231.00px;">5</div>
<div class="t" style="top:577.5px;font-size:11.5px;color:#383d62;right:145.00px;">5</div>
<div class="a" style="left:28px;top:594px;width:824px;height:23px;background:#cfd3e7;"></div>
<div class="a" style="left:852px;top:594px;width:89px;height:23px;background:#b6f0cd;"></div>
<div class="a" style="left:941px;top:594px;width:86px;height:23px;background:#ffbdbc;"></div>
<div class="a" style="left:1027px;top:594px;width:86px;height:23px;background:#ffbdbc;"></div>
<div class="a" style="left:1113px;top:594px;width:86px;height:23px;background:#b6f0cd;"></div>
<div class="a" style="left:1199px;top:594px;width:86px;height:23px;background:#ffbdbc;"></div>
<div class="a" style="left:1285px;top:594px;width:86px;height:23px;background:#b6f0cd;"></div>
<div class="a" style="left:1371px;top:594px;width:86px;height:23px;background:#b6f0cd;"></div>
<div class="a" style="left:1457px;top:594px;width:86px;height:23px;background:#b6f0cd;"></div>
<div class="a" style="left:1543px;top:594px;width:86px;height:23px;background:#b6f0cd;"></div>
<div class="a" style="left:1629px;top:594px;width:86px;height:23px;background:#b6f0cd;"></div>
<div class="a" style="left:1715px;top:594px;width:86px;height:23px;background:#b6f0cd;"></div>
<div class="a" style="left:1801px;top:594px;width:31px;height:23px;background:#b6f0cd;"></div>
<svg class="a" style="left:82px;top:601px;" width="12" height="8" viewBox="0 0 12 8"><path d="M1.5 6.5 L6 2 L10.5 6.5" fill="none" stroke="#373d63" stroke-width="2.1"/></svg>
<div class="t" style="top:599px;font-size:12px;-webkit-text-stroke:0.42px currentColor;color:#383d62;letter-spacing:0.120px;left:107.5px;">Profile INF-TECH - Technicien Production</div>
<div class="t" style="top:602px;font-size:11.5px;-webkit-text-stroke:0.42px currentColor;color:#383d62;right:919.00px;">361 / 480</div>
<div class="t" style="top:602px;font-size:11.5px;-webkit-text-stroke:0.42px currentColor;color:#383d62;right:833.00px;">43 / 40</div>
<div class="t" style="top:602px;font-size:11.5px;-webkit-text-stroke:0.42px currentColor;color:#383d62;right:747.00px;">50 / 40</div>
<div class="t" style="top:602px;font-size:11.5px;-webkit-text-stroke:0.42px currentColor;color:#383d62;right:661.00px;">28 / 40</div>
<div class="t" style="top:602px;font-size:11.5px;-webkit-text-stroke:0.42px currentColor;color:#383d62;right:575.00px;">44 / 40</div>
<div class="t" style="top:602px;font-size:11.5px;-webkit-text-stroke:0.42px currentColor;color:#383d62;right:489.00px;">30 / 40</div>
<div class="t" style="top:602px;font-size:11.5px;-webkit-text-stroke:0.42px currentColor;color:#383d62;right:403.00px;">26 / 40</div>
<div class="t" style="top:602px;font-size:11.5px;-webkit-text-stroke:0.42px currentColor;color:#383d62;right:317.00px;">24 / 40</div>
<div class="t" style="top:602px;font-size:11.5px;-webkit-text-stroke:0.42px currentColor;color:#383d62;right:231.00px;">24 / 40</div>
<div class="t" style="top:602px;font-size:11.5px;-webkit-text-stroke:0.42px currentColor;color:#383d62;right:145.00px;">24 / 40</div>
<div class="t" style="top:602px;font-size:11.5px;-webkit-text-stroke:0.42px currentColor;color:#383d62;right:59.00px;">24 / 40</div>
<div class="a" style="left:852px;top:617px;width:89px;height:24px;background:#fff3f1;"></div>
<svg class="a" style="left:35px;top:621px;" width="16" height="16" viewBox="0 0 16 16"><g fill="none" stroke="#373d63" stroke-width="1.3"><rect x="1.5" y="3.6" width="12" height="11.3"/><path d="M4.8 1.8 V4.6 M10.2 1.8 V4.6" stroke-width="0.9" opacity="0.8"/><path d="M4.6 9.2 L6.9 11.4 L10.6 7.2" stroke-width="1.2"/></g></svg>
<svg class="a" style="left:56px;top:623px;" width="16" height="13" viewBox="0 0 16 13"><g fill="none" stroke="#3f6df6" stroke-width="1.7" stroke-linecap="round" stroke-linejoin="round"><path d="M1.5 6.5 H13.8 M9 1.5 L14 6.5 L9 11.5"/></g></svg>
<div class="t" style="top:625px;font-size:12px;color:#383d62;left:153px;">Activity Pôle Infra - Run</div>
<div class="t" style="top:625px;font-size:12px;color:#383d62;left:481.5px;">D. SI - Techniques</div>
<div class="t" style="top:625px;font-size:12px;color:#383d62;left:652.5px;">Started</div>
<div class="t" style="top:625px;font-size:12px;color:#383d62;left:736px;">En cours</div>
<div class="t" style="top:625.5px;font-size:11.5px;color:#383d62;right:919.00px;">209</div>
<div class="t" style="top:625.5px;font-size:11.5px;color:#383d62;right:833.00px;">30</div>
<div class="t" style="top:625.5px;font-size:11.5px;color:#383d62;right:747.00px;">19</div>
<div class="t" style="top:625.5px;font-size:11.5px;color:#383d62;right:661.00px;">15</div>
<div class="t" style="top:625.5px;font-size:11.5px;color:#383d62;right:575.00px;">33</div>
<div class="t" style="top:625.5px;font-size:11.5px;color:#383d62;right:489.00px;">19</div>
<div class="t" style="top:625.5px;font-size:11.5px;color:#383d62;right:403.00px;">15</div>
<div class="t" style="top:625.5px;font-size:11.5px;color:#383d62;right:317.00px;">13</div>
<div class="t" style="top:625.5px;font-size:11.5px;color:#383d62;right:231.00px;">13</div>
<div class="t" style="top:625.5px;font-size:11.5px;color:#383d62;right:145.00px;">13</div>
<div class="t" style="top:625.5px;font-size:11.5px;color:#383d62;right:59.00px;">13</div>
<div class="a" style="left:852px;top:641px;width:89px;height:24px;background:#fff3f1;"></div>
<svg class="a" style="left:35px;top:645px;" width="16" height="16" viewBox="0 0 16 16"><g fill="none" stroke="#373d63" stroke-width="1.3"><rect x="1.5" y="3.6" width="12" height="11.3"/><path d="M4.8 1.8 V4.6 M10.2 1.8 V4.6" stroke-width="0.9" opacity="0.8"/><path d="M4.6 9.2 L6.9 11.4 L10.6 7.2" stroke-width="1.2"/></g></svg>
<svg class="a" style="left:56px;top:647px;" width="16" height="13" viewBox="0 0 16 13"><g fill="none" stroke="#3f6df6" stroke-width="1.7" stroke-linecap="round" stroke-linejoin="round"><path d="M1.5 6.5 H13.8 M9 1.5 L14 6.5 L9 11.5"/></g></svg>
<div class="t" style="top:649px;font-size:12px;color:#383d62;left:153px;">Activity Pôle Infra - Télécoms</div>
<div class="t" style="top:649px;font-size:12px;color:#383d62;left:481.5px;">D. SI - Techniques</div>
<div class="t" style="top:649px;font-size:12px;color:#383d62;left:652.5px;">Started</div>
<div class="t" style="top:649px;font-size:12px;color:#383d62;left:736px;">En cours</div>
<div class="t" style="top:649.5px;font-size:11.5px;color:#383d62;right:919.00px;">108</div>
<div class="t" style="top:649.5px;font-size:11.5px;color:#383d62;right:833.00px;">9</div>
<div class="t" style="top:649.5px;font-size:11.5px;color:#383d62;right:747.00px;">9</div>
<div class="t" style="top:649.5px;font-size:11.5px;color:#383d62;right:661.00px;">9</div>
<div class="t" style="top:649.5px;font-size:11.5px;color:#383d62;right:575.00px;">9</div>
<div class="t" style="top:649.5px;font-size:11.5px;color:#383d62;right:489.00px;">9</div>
<div class="t" style="top:649.5px;font-size:11.5px;color:#383d62;right:403.00px;">9</div>
<div class="t" style="top:649.5px;font-size:11.5px;color:#383d62;right:317.00px;">9</div>
<div class="t" style="top:649.5px;font-size:11.5px;color:#383d62;right:231.00px;">9</div>
<div class="t" style="top:649.5px;font-size:11.5px;color:#383d62;right:145.00px;">9</div>
<div class="t" style="top:649.5px;font-size:11.5px;color:#383d62;right:59.00px;">9</div>
<div class="a" style="left:852px;top:665px;width:89px;height:24px;background:#fff3f1;"></div>
<svg class="a" style="left:35px;top:669px;" width="16" height="16" viewBox="0 0 16 16"><g fill="none" stroke="#373d63" stroke-width="1.3"><rect x="1.5" y="3.6" width="12" height="11.3"/><path d="M4.8 1.8 V4.6 M10.2 1.8 V4.6" stroke-width="0.9" opacity="0.8"/><path d="M4.6 9.2 L6.9 11.4 L10.6 7.2" stroke-width="1.2"/></g></svg>
<svg class="a" style="left:56px;top:671px;" width="16" height="13" viewBox="0 0 16 13"><g fill="none" stroke="#3f6df6" stroke-width="1.7" stroke-linecap="round" stroke-linejoin="round"><path d="M1.5 6.5 H13.8 M9 1.5 L14 6.5 L9 11.5"/></g></svg>
<div class="t" style="top:673px;font-size:12px;color:#383d62;left:153px;">Activity Postes de Travail</div>
<div class="t" style="top:673px;font-size:12px;color:#383d62;left:481.5px;">D. SI - Techniques</div>
<div class="t" style="top:673px;font-size:12px;color:#383d62;left:652.5px;">Started</div>
<div class="t" style="top:673px;font-size:12px;color:#383d62;left:736px;">En cours</div>
<div class="t" style="top:673.5px;font-size:11.5px;color:#383d62;right:919.00px;">18</div>
<div class="t" style="top:673.5px;font-size:11.5px;color:#383d62;right:747.00px;">2</div>
<div class="t" style="top:673.5px;font-size:11.5px;color:#383d62;right:661.00px;">2</div>
<div class="t" style="top:673.5px;font-size:11.5px;color:#383d62;right:575.00px;">2</div>
<div class="t" style="top:673.5px;font-size:11.5px;color:#383d62;right:489.00px;">2</div>
<div class="t" style="top:673.5px;font-size:11.5px;color:#383d62;right:403.00px;">2</div>
<div class="t" style="top:673.5px;font-size:11.5px;color:#383d62;right:317.00px;">2</div>
<div class="t" style="top:673.5px;font-size:11.5px;color:#383d62;right:231.00px;">2</div>
<div class="t" style="top:673.5px;font-size:11.5px;color:#383d62;right:145.00px;">2</div>
<div class="t" style="top:673.5px;font-size:11.5px;color:#383d62;right:59.00px;">2</div>
<div class="a" style="left:852px;top:689px;width:89px;height:24px;background:#fff3f1;"></div>
<svg class="a" style="left:35px;top:693px;" width="16" height="16" viewBox="0 0 16 16"><g fill="none" stroke="#373d63" stroke-width="1.3"><rect x="1.5" y="3.6" width="12" height="11.3"/><path d="M4.8 1.8 V4.6 M10.2 1.8 V4.6" stroke-width="0.9" opacity="0.8"/><path d="M4.6 9.2 L6.9 11.4 L10.6 7.2" stroke-width="1.2"/></g></svg>
<svg class="a" style="left:56px;top:695px;" width="16" height="13" viewBox="0 0 16 13"><g fill="none" stroke="#3f6df6" stroke-width="1.7" stroke-linecap="round" stroke-linejoin="round"><path d="M1.5 6.5 H13.8 M9 1.5 L14 6.5 L9 11.5"/></g></svg>
<div class="t" style="top:697px;font-size:12px;color:#383d62;left:153px;">Project [DSI000025] Mon projet Alpha</div>
<div class="t" style="top:697px;font-size:12px;color:#383d62;left:481.5px;">D. SI - Techniques</div>
<div class="t" style="top:697px;font-size:12px;color:#383d62;left:652.5px;">Started</div>
<div class="t" style="top:697px;font-size:12px;color:#383d62;left:736px;">En réalisation</div>
<div class="t" style="top:697.5px;font-size:11.5px;color:#383d62;right:919.00px;">26</div>
<div class="t" style="top:697.5px;font-size:11.5px;color:#383d62;right:833.00px;">4</div>
<div class="t" style="top:697.5px;font-size:11.5px;color:#383d62;right:747.00px;">20</div>
<div class="t" style="top:697.5px;font-size:11.5px;color:#383d62;right:661.00px;">2</div>
<div class="a" style="left:28px;top:714px;width:824px;height:23px;background:#cfd3e7;"></div>
<div class="a" style="left:852px;top:714px;width:89px;height:23px;background:#b6f0cd;"></div>
<div class="a" style="left:941px;top:714px;width:86px;height:23px;background:#cfd3e7;"></div>
<div class="a" style="left:1027px;top:714px;width:86px;height:23px;background:#cfd3e7;"></div>
<div class="a" style="left:1113px;top:714px;width:86px;height:23px;background:#cfd3e7;"></div>
<div class="a" style="left:1199px;top:714px;width:86px;height:23px;background:#cfd3e7;"></div>
<div class="a" style="left:1285px;top:714px;width:86px;height:23px;background:#cfd3e7;"></div>
<div class="a" style="left:1371px;top:714px;width:86px;height:23px;background:#cfd3e7;"></div>
<div class="a" style="left:1457px;top:714px;width:86px;height:23px;background:#cfd3e7;"></div>
<div class="a" style="left:1543px;top:714px;width:86px;height:23px;background:#cfd3e7;"></div>
<div class="a" style="left:1629px;top:714px;width:86px;height:23px;background:#b6f0cd;"></div>
<div class="a" style="left:1715px;top:714px;width:86px;height:23px;background:#b6f0cd;"></div>
<div class="a" style="left:1801px;top:714px;width:31px;height:23px;background:#b6f0cd;"></div>
<svg class="a" style="left:82px;top:721px;" width="12" height="8" viewBox="0 0 12 8"><path d="M1.5 6.5 L6 2 L10.5 6.5" fill="none" stroke="#373d63" stroke-width="2.1"/></svg>
<div class="t" style="top:719px;font-size:12px;-webkit-text-stroke:0.42px currentColor;color:#383d62;letter-spacing:0.058px;left:107.5px;">Profile INF-CP - Chef de Projet Infra</div>
<div class="t" style="top:722px;font-size:11.5px;-webkit-text-stroke:0.42px currentColor;color:#383d62;right:919.00px;">- / 76</div>
<div class="t" style="top:722px;font-size:11.5px;-webkit-text-stroke:0.42px currentColor;color:#383d62;right:145.00px;">- / 22</div>
<div class="t" style="top:722px;font-size:11.5px;-webkit-text-stroke:0.42px currentColor;color:#383d62;right:59.00px;">- / 18</div>
<div class="a" style="left:28px;top:185px;width:1804px;height:1px;background:#e1e2ec;"></div>
<div class="a" style="left:476px;top:160px;width:1px;height:25px;background:#c2c5d6;"></div>
<div class="a" style="left:476px;top:185px;width:1px;height:553px;background:#e2e3ec;"></div>
<div class="a" style="left:28px;top:748px;width:1804px;height:2px;background:#b5b7c8;"></div>
<div class="a" style="left:476px;top:750px;width:1px;height:37px;background:#e2e3ec;"></div>
<div class="a" style="left:852px;top:750px;width:89px;height:22px;background:#86e5ae;"></div>
<div class="a" style="left:941px;top:750px;width:86px;height:22px;background:#ff8b89;"></div>
<div class="a" style="left:1027px;top:750px;width:86px;height:22px;background:#ff8b89;"></div>
<div class="a" style="left:1113px;top:750px;width:86px;height:22px;background:#86e5ae;"></div>
<div class="a" style="left:1199px;top:750px;width:86px;height:22px;background:#ffffff;"></div>
<div class="a" style="left:1285px;top:750px;width:86px;height:22px;background:#86e5ae;"></div>
<div class="a" style="left:1371px;top:750px;width:86px;height:22px;background:#86e5ae;"></div>
<div class="a" style="left:1457px;top:750px;width:86px;height:22px;background:#86e5ae;"></div>
<div class="a" style="left:1543px;top:750px;width:86px;height:22px;background:#86e5ae;"></div>
<div class="a" style="left:1629px;top:750px;width:86px;height:22px;background:#86e5ae;"></div>
<div class="a" style="left:1715px;top:750px;width:86px;height:22px;background:#86e5ae;"></div>
<div class="a" style="left:1801px;top:750px;width:31px;height:22px;background:#86e5ae;"></div>
<div class="t" style="top:758px;font-size:11.5px;-webkit-text-stroke:0.42px currentColor;color:#383d62;right:919.00px;">1594 / 2219</div>
<div class="t" style="top:758px;font-size:11.5px;-webkit-text-stroke:0.42px currentColor;color:#383d62;right:833.00px;">196 / 186</div>
<div class="t" style="top:758px;font-size:11.5px;-webkit-text-stroke:0.42px currentColor;color:#383d62;right:747.00px;">189 / 177</div>
<div class="t" style="top:758px;font-size:11.5px;-webkit-text-stroke:0.42px currentColor;color:#383d62;right:661.00px;">164 / 179</div>
<div class="t" style="top:758px;font-size:11.5px;-webkit-text-stroke:0.42px currentColor;color:#383d62;right:575.00px;">178 / 178</div>
<div class="t" style="top:758px;font-size:11.5px;-webkit-text-stroke:0.42px currentColor;color:#383d62;right:489.00px;">164 / 171</div>
<div class="t" style="top:758px;font-size:11.5px;-webkit-text-stroke:0.42px currentColor;color:#383d62;right:403.00px;">162 / 177</div>
<div class="t" style="top:758px;font-size:11.5px;-webkit-text-stroke:0.42px currentColor;color:#383d62;right:317.00px;">160 / 181</div>
<div class="t" style="top:758px;font-size:11.5px;-webkit-text-stroke:0.42px currentColor;color:#383d62;right:231.00px;">129 / 176</div>
<div class="t" style="top:758px;font-size:11.5px;-webkit-text-stroke:0.42px currentColor;color:#383d62;right:145.00px;">126 / 204</div>
<div class="t" style="top:758px;font-size:11.5px;-webkit-text-stroke:0.42px currentColor;color:#383d62;right:59.00px;">45 / 204</div>
<div class="a" style="left:28px;top:772px;width:448px;height:15px;background:#f9f9fb;"></div>
<div class="a" style="left:477px;top:772px;width:1355px;height:15px;background:#f9f9fb;border-bottom-right-radius:5px"></div>
<svg class="a" style="left:33.5px;top:775.5px;" width="7" height="9" viewBox="0 0 7 9"><polygon points="7,0 0,4.5 7,9" fill="#8a8a8a"/></svg>
<svg class="a" style="left:464px;top:775.5px;" width="7" height="9" viewBox="0 0 7 9"><polygon points="0,0 7,4.5 0,9" fill="#8a8a8a"/></svg>
<svg class="a" style="left:482.5px;top:775.5px;" width="7" height="9" viewBox="0 0 7 9"><polygon points="7,0 0,4.5 7,9" fill="#8a8a8a"/></svg>
<svg class="a" style="left:1819.5px;top:775.5px;" width="7" height="9" viewBox="0 0 7 9"><polygon points="0,0 7,4.5 0,9" fill="#8a8a8a"/></svg>
<div class="a" style="left:495px;top:775px;width:1195px;height:9px;background:#8c8c8c;border-radius:4.5px"></div>
<div class="a" style="left:240px;top:330px;width:251px;height:41px;background:rgba(255,255,255,0.2);border-radius:3px;box-shadow:0 0 6px rgba(0,0,0,0.06)"></div>
<div class="t" style="top:345px;font-size:12px;color:#c6c7d2;letter-spacing:-0.082px;left:252.5px;">Project [DSI000017] Market Augmenté IA 2</div>
</body></html>
